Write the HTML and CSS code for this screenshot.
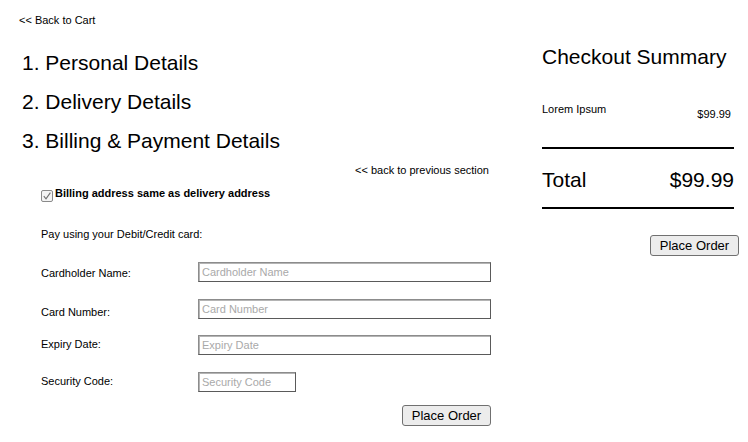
FILE: index.html
```html
<!DOCTYPE html>
<html>
<head>
<meta charset="utf-8">
<link rel="stylesheet" href="styles.css">
</head>
<body>
<div class="page">
  <div class="main">
    <a class="back-cart" href="#">&lt;&lt; Back to Cart</a>
    <div class="steps">
      <div class="step">1. Personal Details</div>
      <div class="step">2. Delivery Details</div>
      <div class="step">3. Billing &amp; Payment Details</div>
    </div>
    <div class="form">
      <div class="prev-row"><a class="prev" href="#">&lt;&lt; back to previous section</a></div>
      <label class="check-row">
        <span class="checkbox"><svg width="10" height="10" viewBox="0 0 10 10"><path d="M1.8 5.2 L4 7.8 L8.4 1.6" fill="none" stroke="#6f6f6f" stroke-width="1.1"/></svg></span>
        <span class="check-label">Billing address same as delivery address</span>
      </label>
      <div class="pay">Pay using your Debit/Credit card:</div>
      <div class="field">
        <span class="label lbl-a">Cardholder Name:</span>
        <input class="input wide" type="text" placeholder="Cardholder Name">
      </div>
      <div class="field">
        <span class="label lbl-b">Card Number:</span>
        <input class="input wide" type="text" placeholder="Card Number">
      </div>
      <div class="field field-tight">
        <span class="label lbl-c">Expiry Date:</span>
        <input class="input wide" type="text" placeholder="Expiry Date">
      </div>
      <div class="field">
        <span class="label lbl-c">Security Code:</span>
        <input class="input short" type="text" placeholder="Security Code">
      </div>
      <div class="actions">
        <button class="btn" type="button">Place Order</button>
      </div>
    </div>
  </div>
  <div class="summary">
    <div class="sum-title">Checkout Summary</div>
    <div class="item">
      <span class="item-name">Lorem Ipsum</span>
      <span class="item-price">$99.99</span>
    </div>
    <div class="rule rule-1"></div>
    <div class="total">
      <span>Total</span>
      <span>$99.99</span>
    </div>
    <div class="rule rule-2"></div>
    <div class="sum-actions">
      <button class="btn" type="button">Place Order</button>
    </div>
  </div>
</div>
</body>
</html>
```

FILE: styles.css
```css
html, body {
  margin: 0;
  padding: 0;
  background: #ffffff;
}

body {
  font-family: "Liberation Sans", Arial, sans-serif;
  color: #000000;
}

.page {
  display: flex;
  width: 748px;
}

.main {
  flex: 0 0 542px;
  padding-top: 14px;
}

.back-cart {
  display: block;
  margin-left: 19px;
  font-size: 11px;
  line-height: 13px;
  color: #000;
  text-decoration: none;
}

.steps {
  margin-top: 16px;
  padding-left: 22px;
}

.step {
  font-size: 21px;
  line-height: 39px;
}

.form {
  width: 450px;
  margin-left: 41px;
}

.prev-row {
  display: flex;
  justify-content: flex-end;
  padding-right: 2px;
  margin-top: 4px;
}

.prev {
  font-size: 11px;
  line-height: 13px;
  color: #000;
  text-decoration: none;
}

.check-row {
  display: flex;
  align-items: flex-start;
  margin-top: 10px;
  font-size: 11px;
  line-height: 13px;
}

.checkbox {
  box-sizing: border-box;
  width: 12px;
  height: 12px;
  margin-top: 3px;
  margin-right: 2px;
  border: 1px solid #8a8a8a;
  border-radius: 2px;
  background: #f4f4f4;
  display: flex;
  align-items: center;
  justify-content: center;
}

.check-label {
  font-weight: bold;
}

.pay {
  margin-top: 26px;
  font-size: 11px;
  line-height: 13px;
}

.field {
  display: flex;
  align-items: flex-start;
  margin-top: 17px;
}

.pay + .field {
  margin-top: 21px;
}

.field-tight {
  margin-top: 16px;
}

.label {
  flex: 0 0 157px;
  font-size: 11px;
  line-height: 13px;
}

.lbl-a { padding-top: 5px; }
.lbl-b { padding-top: 7px; }
.lbl-c { padding-top: 3px; }

.input {
  box-sizing: border-box;
  height: 20px;
  margin: 0;
  padding: 0 3px;
  font-family: "Liberation Sans", Arial, sans-serif;
  font-size: 11px;
  color: #000;
  background: #fff;
  border: 1px solid #5a5a5a;
  border-top-color: #8c8c8c;
  border-left-color: #8c8c8c;
  box-shadow: inset 1px 1px 0 #b4b4b4;
  outline: none;
}

.input::placeholder {
  color: #a9a9a9;
}

.wide {
  width: 293px;
}

.short {
  width: 98px;
}

.actions {
  display: flex;
  justify-content: flex-end;
  margin-top: 13px;
}

.btn {
  box-sizing: border-box;
  width: 89px;
  height: 21px;
  padding: 0;
  font-family: "Liberation Sans", Arial, sans-serif;
  font-size: 13px;
  color: #000;
  background: #ececec;
  border: 1px solid #707070;
  border-radius: 3px;
}

.summary {
  width: 197px;
  padding-top: 45px;
}

.sum-title {
  font-size: 21px;
  line-height: 24px;
}

.item {
  display: flex;
  justify-content: space-between;
  align-items: flex-start;
  margin-top: 34px;
  margin-right: 8px;
  font-size: 11px;
  line-height: 13px;
}

.item-price {
  padding-top: 5px;
}

.rule {
  height: 2px;
  margin-right: 5px;
  background: #000;
}

.rule-1 {
  margin-top: 26px;
}

.rule-2 {
  margin-top: 15px;
}

.total {
  display: flex;
  justify-content: space-between;
  margin-top: 19px;
  margin-right: 5px;
  font-size: 21px;
  line-height: 24px;
}

.sum-actions {
  display: flex;
  justify-content: flex-end;
  margin-top: 26px;
}
```
